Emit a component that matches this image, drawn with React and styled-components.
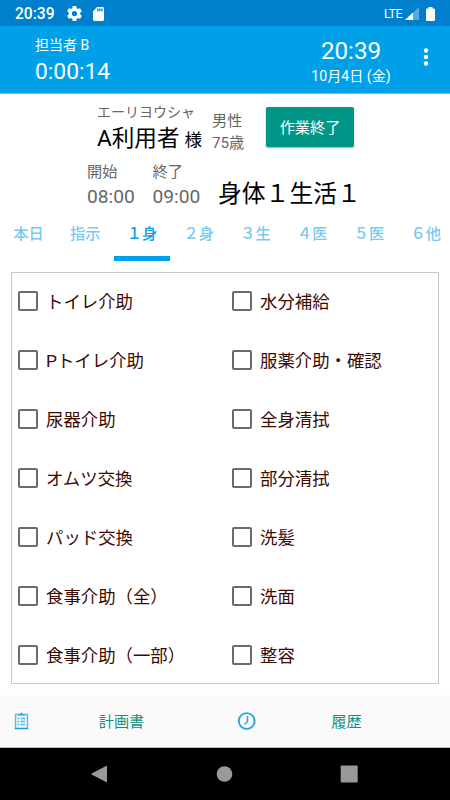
import { useState } from "react";
import styled, { createGlobalStyle } from "styled-components";

const GlobalStyle = createGlobalStyle`
  * {
    box-sizing: border-box;
  }
  body {
    margin: 0;
    background: #fff;
    font-family: Roboto, "Noto Sans CJK JP", sans-serif;
  }
`;
const Screen = styled.div`
  width: 450px;
  height: 800px;
  display: flex;
  flex-direction: column;
  overflow: hidden;
  background: #fff;
  white-space: nowrap;
`;
const StatusBar = styled.div`
  height: 26px;
  padding: 1px 15px 0 15px;
  display: flex;
  align-items: center;
  background: #0080cc;
  color: #fff;
`;
const StatusTime = styled.span`
  width: 52px;
  font-size: 15.6px;
  font-weight: 500;
`;
const Network = styled.span`
  margin-left: auto;
  margin-right: 3px;
  font-size: 12.5px;
  letter-spacing: -0.5px;
`;
const Icon = styled.svg`
  display: block;
  flex: none;
  margin-left: ${(props) => props.$left || 0}px;
`;
const Header = styled.header`
  height: 68px;
  padding: 9px 18px 0 35px;
  display: flex;
  background: #00a0e9;
  border-bottom: 1px solid #6cc4f0;
  color: #fff;
`;
const Clock = styled.div`
  width: 90px;
  margin-left: auto;
  margin-right: 24px;
  text-align: center;
`;
const Line = styled.div`
  height: ${(props) => props.$height}px;
  line-height: ${(props) => props.$height}px;
  font-size: ${(props) => props.$size}px;
  color: ${(props) => props.$color || "inherit"};
`;
const MenuButton = styled.button`
  width: 12px;
  height: 24px;
  margin-top: 10px;
  padding: 0;
  border: none;
  background: none;
`;
const Patient = styled.section`
  height: 64px;
  padding: 8px 0 0 97px;
  display: flex;
`;
const PatientName = styled.div`
  width: 115px;
`;
const Honorific = styled.span`
  margin-left: 5px;
  font-size: 17.5px;
`;
const Profile = styled.div`
  width: 54px;
  padding-top: 8px;
`;
const FinishButton = styled.button`
  width: 88px;
  height: 40px;
  margin-top: 5px;
  padding: 0 0 2px;
  border: none;
  border-radius: 2px;
  background: #009688;
  box-shadow: 0 1px 2px rgba(0, 0, 0, 0.35);
  color: #fff;
  font-family: inherit;
  font-size: 15.2px;
`;
const Schedule = styled.section`
  height: 53px;
  padding: 3px 0 0 87px;
  display: flex;
`;
const Period = styled.div`
  width: 65.5px;
`;
const Service = styled.div`
  height: 34px;
  margin-top: 16px;
  line-height: 34px;
  font-size: 23.8px;
  color: #000;
`;
const Tabs = styled.nav`
  height: 50px;
  display: flex;
  margin-right: -4px;
`;
const Tab = styled.button`
  flex: 1;
  padding: 4px 0 3px;
  border: none;
  border-bottom: 5px solid
    ${(props) => (props.$active ? "#00a0e9" : "transparent")};
  background: none;
  color: ${(props) => (props.$active ? "#0c9fe6" : "#76cbf3")};
  font-family: inherit;
  font-size: 15.2px;
  font-weight: 500;
  line-height: 38px;
`;
const TaskList = styled.main`
  height: 412px;
  margin: 11px 11px 0;
  border: 1px solid #c8c8c8;
  display: grid;
  grid-template-columns: 214px 1fr;
  grid-template-rows: repeat(7, 58.9px);
`;
const Task = styled.label`
  display: flex;
  align-items: center;
  padding: 0 0 2px 6px;
  font-size: 17.4px;
  color: #3c0a00;
`;
const TaskName = styled.span`
  padding-bottom: 1px;
`;
const CheckBox = styled.input`
  appearance: none;
  width: 20px;
  height: 20px;
  margin: 0 8px 0 0;
  border: 2px solid #6b6b6b;
  border-radius: 2px;
  background: #fff;
  &:checked {
    background: #009688;
  }
`;
const Footer = styled.footer`
  height: 53px;
  margin-top: 11px;
  display: flex;
  background: #fafafa;
  border-bottom: 1px solid #b4c0bc;
`;
const FooterButton = styled.button`
  flex: 1;
  display: flex;
  align-items: center;
  padding: 0 0 0 12px;
  border: none;
  background: none;
  color: #0e9181;
  font-family: inherit;
  font-size: 15.2px;
`;
const FooterLabel = styled.span`
  flex: 1;
  padding: 0 14px 2px 0;
  text-align: center;
`;
const NavigationBar = styled.div`
  height: 52px;
  padding: 0 92px 0 90px;
  display: flex;
  align-items: center;
  justify-content: space-between;
  background: #000;
`;

const tabs = ["本日", "指示", "１身", "２身", "３生", "４医", "５医", "６他"];
const tasks = [
  "トイレ介助",
  "水分補給",
  "Pトイレ介助",
  "服薬介助・確認",
  "尿器介助",
  "全身清拭",
  "オムツ交換",
  "部分清拭",
  "パッド交換",
  "洗髪",
  "食事介助（全）",
  "洗面",
  "食事介助（一部）",
  "整容",
];

function StatusIcons() {
  return (
    <StatusBar>
      <StatusTime>20:39</StatusTime>
      <Icon width="15" height="15" viewBox="2 2 20 20" fill="#fff">
        <path d="M19.43 12.98c.04-.32.07-.64.07-.98s-.03-.66-.07-.98l2.11-1.65c.19-.15.24-.42.12-.64l-2-3.46c-.12-.22-.39-.3-.61-.22l-2.49 1c-.52-.4-1.08-.73-1.69-.98l-.38-2.65A.49.49 0 0 0 14 2h-4c-.25 0-.46.18-.49.42l-.38 2.65c-.61.25-1.17.59-1.69.98l-2.49-1c-.23-.09-.49 0-.61.22l-2 3.46c-.13.22-.07.49.12.64l2.11 1.65c-.04.32-.07.65-.07.98s.03.66.07.98l-2.11 1.65c-.19.15-.24.42-.12.64l2 3.46c.12.22.39.3.61.22l2.49-1c.52.4 1.08.73 1.69.98l.38 2.65c.03.24.24.42.49.42h4c.25 0 .46-.18.49-.42l.38-2.65c.61-.25 1.17-.59 1.69-.98l2.49 1c.23.09.49 0 .61-.22l2-3.46c.12-.22.07-.49-.12-.64zM12 15.5a3.5 3.5 0 1 1 0-7 3.5 3.5 0 0 1 0 7z" />
      </Icon>
      <Icon $left={11} width="11" height="14" viewBox="4 2 16 20" fill="#fff" preserveAspectRatio="none">
        <path d="M18 2h-8L4 8v12c0 1.1.9 2 2 2h12c1.1 0 2-.9 2-2V4c0-1.1-.9-2-2-2zm-6 6h-2V4h2zm3 0h-2V4h2zm3 0h-2V4h2z" />
      </Icon>
      <Network>LTE</Network>
      <Icon width="14" height="13" viewBox="0 0 14 13">
        <path d="M14 0v13H0z" fill="#56abdd" />
        <path d="M8 5.6V13H0z" fill="#fff" />
      </Icon>
      <Icon $left={7} width="9" height="14" viewBox="0 0 9 14" fill="#fff">
        <path d="M2.5 0h4v1.5H8q1 0 1 1V13q0 1-1 1H1q-1 0-1-1V2.5q0-1 1-1h1.5z" />
      </Icon>
    </StatusBar>
  );
}

function TaskItem({ name }) {
  const [checked, setChecked] = useState(false);
  return (
    <Task>
      <CheckBox
        type="checkbox"
        checked={checked}
        onChange={() => setChecked(!checked)}
      />
      <TaskName>{name}</TaskName>
    </Task>
  );
}

export default function App() {
  const [activeTab, setActiveTab] = useState(2);

  return (
    <Screen>
      <GlobalStyle />
      <StatusIcons />
      <Header>
        <div>
          <Line $size={14} $height={20}>担当者 B</Line>
          <Line $size={22.8} $height={33}>0:00:14</Line>
        </div>
        <Clock>
          <Line $size={24.2} $height={32}>20:39</Line>
          <Line $size={14.1} $height={18}>10月4日 (金)</Line>
        </Clock>
        <MenuButton>
          <Icon width="12" height="24" viewBox="0 0 12 24" fill="#fff">
            <circle cx="6" cy="5.5" r="2.2" />
            <circle cx="6" cy="12" r="2.2" />
            <circle cx="6" cy="18.5" r="2.2" />
          </Icon>
        </MenuButton>
      </Header>
      <Patient>
        <PatientName>
          <Line $size={14} $height={20} $color="#666">エーリヨウシャ</Line>
          <Line $size={22.6} $height={34} $color="#000">
            A利用者<Honorific>様</Honorific>
          </Line>
        </PatientName>
        <Profile>
          <Line $size={15.2} $height={22} $color="#666">男性</Line>
          <Line $size={15.2} $height={22} $color="#666">75歳</Line>
        </Profile>
        <FinishButton>作業終了</FinishButton>
      </Patient>
      <Schedule>
        <Period>
          <Line $size={15.2} $height={22} $color="#666">開始</Line>
          <Line $size={19.2} $height={28} $color="#666">08:00</Line>
        </Period>
        <Period>
          <Line $size={15.2} $height={22} $color="#666">終了</Line>
          <Line $size={19.2} $height={28} $color="#666">09:00</Line>
        </Period>
        <Service>身体１生活１</Service>
      </Schedule>
      <Tabs>
        {tabs.map((tab, index) => (
          <Tab
            key={tab}
            $active={index === activeTab}
            onClick={() => setActiveTab(index)}
          >
            {tab}
          </Tab>
        ))}
      </Tabs>
      <TaskList>
        {tasks.map((task) => (
          <TaskItem key={task} name={task} />
        ))}
      </TaskList>
      <Footer>
        <FooterButton>
          <Icon width="20" height="20" viewBox="0 0 20 20" fill="none">
            <path d="M3.5 3.5h12v14h-12z" fill="#e6f6fc" stroke="#5dbbdf" strokeWidth="1.4" />
            <path d="M2.8 17.5h13.4" stroke="#1aa0cf" strokeWidth="1.2" />
            <path d="M6 4.500V3h2l1.500-1.800L11 3h2v1.500z" fill="#39aad4" />
            <path d="M5.5 7.5H7M8.5 7.5H13M5.5 10.5H7M8.5 10.5H13M5.5 13.5H7M8.5 13.5H13" stroke="#5dbbdf" strokeWidth="1.3" />
          </Icon>
          <FooterLabel>計画書</FooterLabel>
        </FooterButton>
        <FooterButton>
          <Icon width="20" height="20" viewBox="0 0 20 20" fill="none" stroke="#2ba6d3">
            <circle cx="9.7" cy="10" r="7.9" strokeWidth="1.9" />
            <path d="M10.5 5v5.5L7.5 13.5" strokeWidth="1.5" />
          </Icon>
          <FooterLabel>履歴</FooterLabel>
        </FooterButton>
      </Footer>
      <NavigationBar>
        <Icon width="18" height="18" viewBox="0 0 18 18" fill="#999">
          <path d="M17 .5v17L1.5 9.6q-.8-.6 0-1.2z" />
        </Icon>
        <Icon width="18" height="18" viewBox="0 0 18 18" fill="#999">
          <circle cx="9.5" cy="9" r="7.8" />
        </Icon>
        <Icon width="18" height="18" viewBox="0 0 18 18" fill="#999">
          <rect x=".7" y=".5" width="17" height="17" rx="1" />
        </Icon>
      </NavigationBar>
    </Screen>
  );
}
